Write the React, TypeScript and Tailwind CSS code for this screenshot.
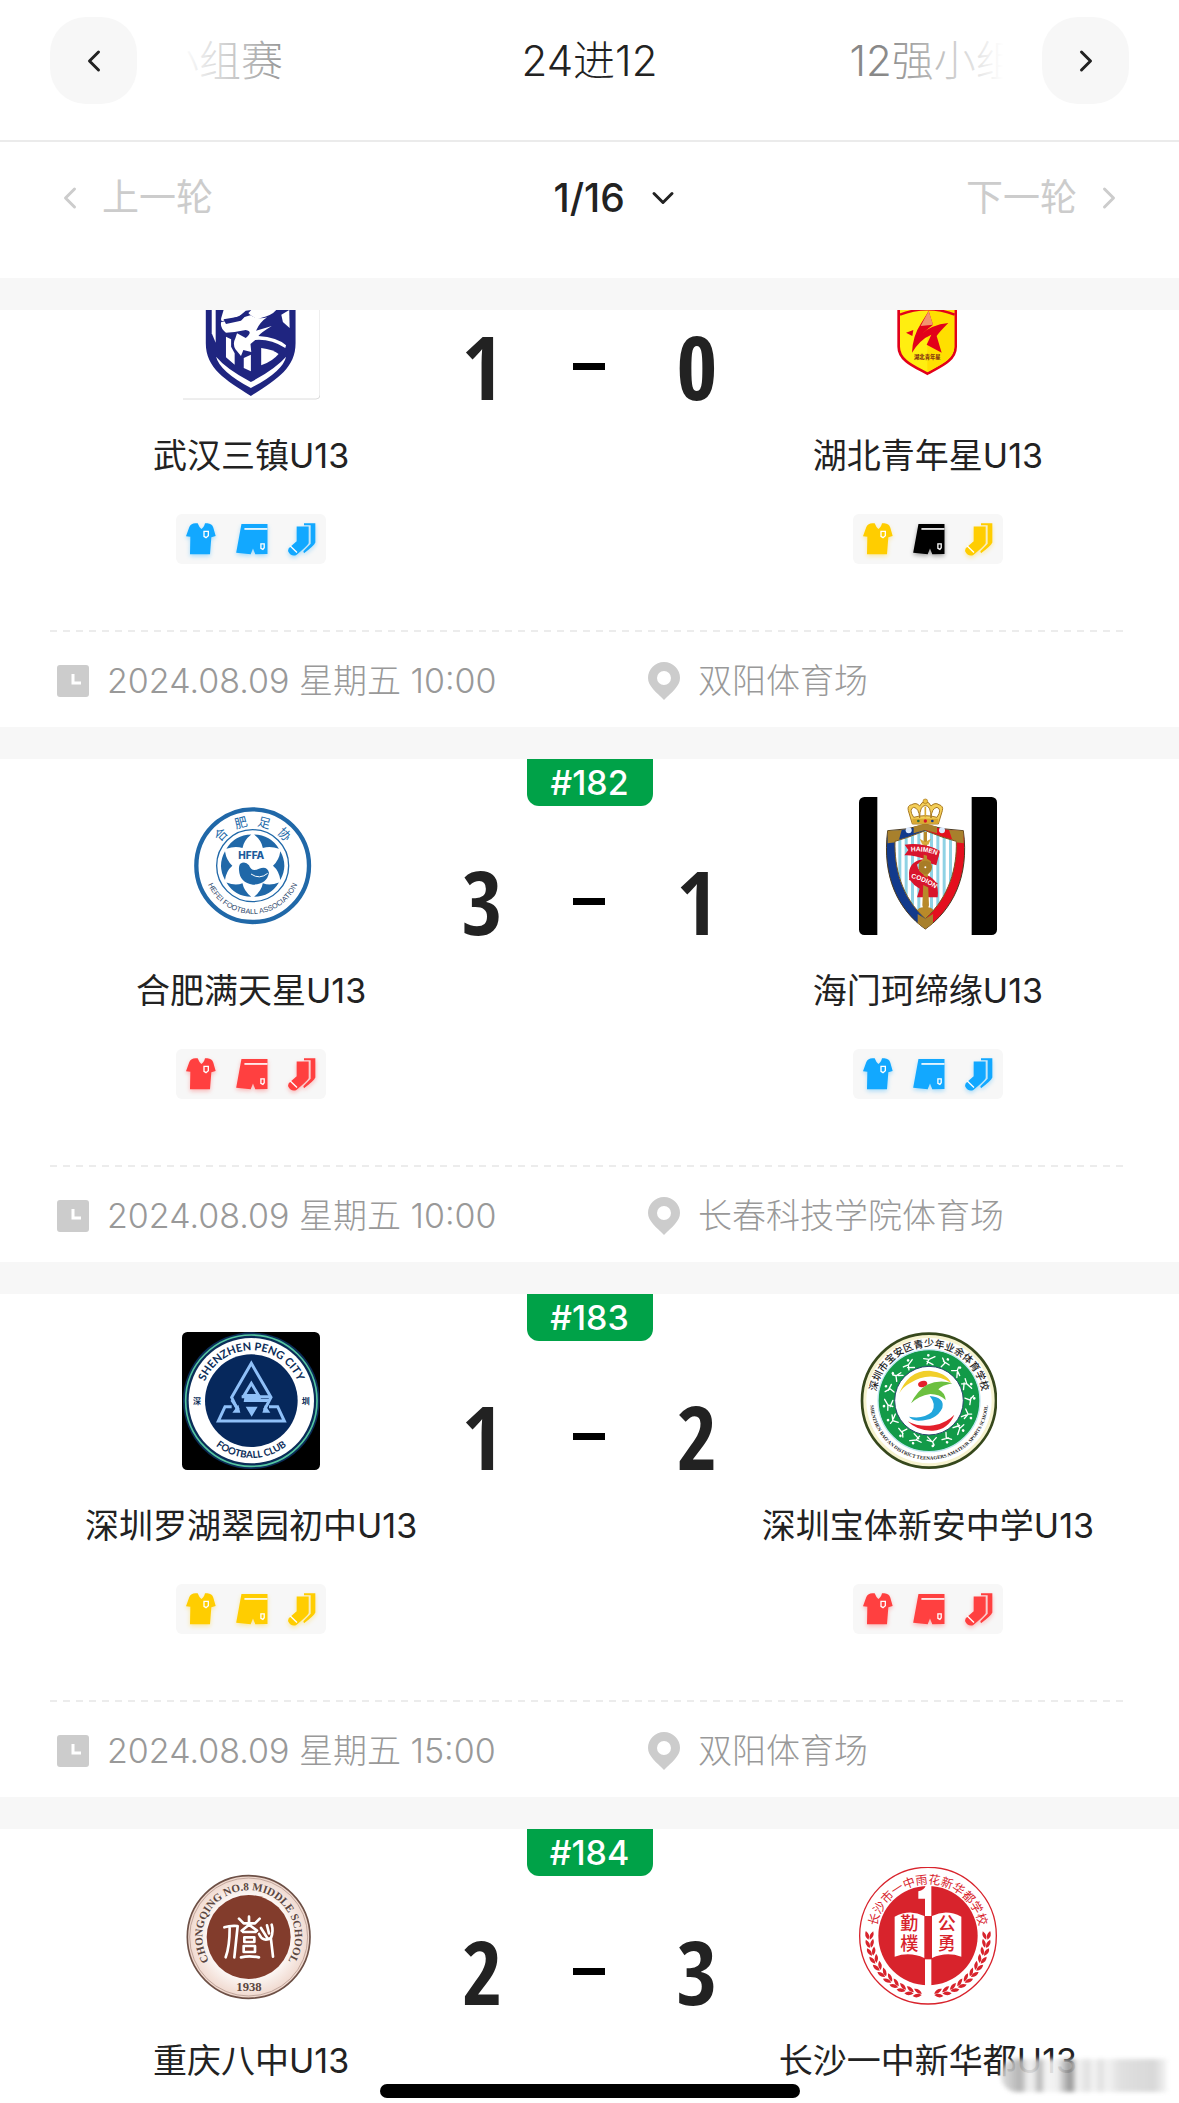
import React from "react";
import { ChevronDown, ChevronLeft, ChevronRight } from "lucide-react";

type KitColors = { shirt: string; shorts: string; socks: string };
type Team = { name: string; logo: React.ReactNode; kit: KitColors };
type Match = {
  id: number;
  home: Team;
  away: Team;
  score: [number, number];
  time: string;
  venue: string;
};

const BLUE = "#12a8ff";
const YELLOW = "#ffcd00";
const RED = "#ff4040";
const BLACK = "#000000";

const LOGO = "block size-[138px]";
const CJK = "'Noto Sans CJK SC', sans-serif";

function WuhanLogo() {
  return (
    <svg viewBox="182 262 138 138" className={LOGO} role="img" aria-label="武汉三镇">
      <path d="M183 399H316Q320 399 320 395V263" fill="none" stroke="#dcdcdc" />
      <g transform="translate(120 300) scale(.3954 .3333)">
        <path d="M217 -90H444V130C444 205 395 240 331 288C267 240 217 205 217 130Z" fill="#1f2580" />
        <path d="M232 30H242V128L232 100Z" fill="#fff" />
        <path d="M262 30H386L400 20Q392 44 356 54Q340 60 322 36Q300 52 262 62Q254 66 256 54Z" fill="#fff" />
        <path d="M256 66Q280 62 306 54L330 46Q350 60 372 52Q354 66 344 92L384 78Q356 98 350 108Q398 112 420 136L418 144Q380 116 342 120L330 132L332 156L312 150L306 168L292 148Q284 132 292 114L296 100L318 114Q338 94 318 90L290 96L268 98Q252 84 256 66Z" fill="#fff" />
        <path d="M262 58L300 50L318 32L332 30L306 62L268 72Z" fill="#1f2580" />
        <path d="M408 44L428 30L429 84L412 66Z" fill="#fff" />
        <path d="M268 110L281 118V140L290 160V194L268 172Z" fill="#fff" />
        <path d="M313 174L331 164V214L313 204Z" fill="#fff" />
        <path d="M357 144Q388 148 401 162Q386 184 357 196Z" fill="#fff" />
        <path d="M243 170Q268 206 331 246Q394 206 420 170Q412 214 331 264Q252 214 243 170Z" fill="#fff" />
      </g>
    </svg>
  );
}

function HubeiLogo() {
  return (
    <svg viewBox="117 -114 414 414" className={LOGO} role="img" aria-label="湖北青年星">
      <path d="M236 -40H407V140C407 182 360 200 322 221C284 200 236 182 236 140Z" fill="#ffee10" stroke="#e2001a" strokeWidth="8" />
      <path d="M322 30H403V140C403 178 358 196 322 216Z" fill="#ffdf00" />
      <path d="M240 44Q322 12 404 44" fill="none" stroke="#e2001a" strokeWidth="7" />
      <path d="M276 158Q278 108 302 72L326 33L339 74L302 104Q334 74 385 69Q358 96 350 108L365 158L320 134L334 104Q300 118 276 158Z" fill="#e2001a" />
      <path d="M326 33L339 74L302 78Z" fill="#f2946f" />
      <path d="M258 98L280 90L277 108Z" fill="#e2001a" />
      <text x="322" y="178" fontSize="16" fontWeight="900" fill="#8a3a10" textAnchor="middle" fontFamily={CJK}>湖北青年星</text>
    </svg>
  );
}

function HefeiLogo() {
  const rays = [0, 60, 120, 180, 240, 300];
  return (
    <svg viewBox="3 21 414 414" className={LOGO} role="img" aria-label="合肥足协">
      <defs>
        <path id="hf-top" d="M95 227A120 120 0 0 1 335 227" />
        <path id="hf-bottom" d="M70 227A145 145 0 0 0 360 227" />
      </defs>
      <circle cx="215" cy="227" r="169" fill="#fff" stroke="#2068a8" strokeWidth="13" />
      <circle cx="215" cy="227" r="108" fill="#fff" stroke="#2068a8" strokeWidth="4" />
      {rays.map((a) => (
        <path key={a} d="M172 144Q215 120 258 144Q230 148 215 166Q200 148 172 144Z" fill="#2068a8" transform={`rotate(${a + 30} 215 227)`} />
      ))}
      <text x="211" y="208" fontSize="30" fontWeight="800" fill="#1c5c9c" textAnchor="middle" fontFamily="Inter, sans-serif">HFFA</text>
      <path d="M177 222Q192 212 204 226Q212 248 234 236Q258 226 264 248Q258 282 216 284Q176 278 174 240Q173 228 177 222Z" fill="#2068a8" />
      <path d="M210 252Q236 270 260 250" fill="none" stroke="#fff" strokeWidth="3" />
      <text fontSize="38" fill="#2068a8" textAnchor="middle" fontFamily={CJK}>
        <textPath href="#hf-top" startOffset="50%">{"合\u00a0\u00a0\u00a0肥\u00a0\u00a0\u00a0足\u00a0\u00a0\u00a0协"}</textPath>
      </text>
      <text fontSize="22" fill="#2a4468" textAnchor="middle" fontFamily="'Liberation Sans', sans-serif">
        <textPath href="#hf-bottom" startOffset="50%">HEFEI FOOTBALL ASSOCIATION</textPath>
      </text>
    </svg>
  );
}

function HaimenLogo() {
  const stripes = [176, 195, 214, 233, 252, 271, 290, 309, 328];
  const shield = "M166 184L204 172L257 152L310 172L350 184C352 262 330 350 257 416C184 350 164 262 166 184Z";
  return (
    <svg viewBox="58 51 414 414" className={LOGO} role="img" aria-label="海门珂缔缘">
      <defs>
        <clipPath id="hm-inner"><path d={shield} /></clipPath>
        <path id="hm-a" d="M214 215Q256 210 300 229" />
        <path id="hm-b" d="M214 294Q250 300 290 328" />
      </defs>
      <rect x="58" y="51" width="414" height="414" rx="16" fill="#000" />
      <rect x="113" y="51" width="283" height="414" fill="#fff" />
      <path d="M257 134V447C176 390 126 290 144 152Q202 150 257 134Z" fill="#123a8c" stroke="#4a3a20" strokeWidth="3" />
      <path d="M257 134V447C338 390 390 290 371 152Q312 150 257 134Z" fill="#e4101e" stroke="#4a3a20" strokeWidth="3" />
      <path d="M144 152L186 150L176 186L144 190ZM371 152L328 150L340 186L372 190ZM222 140L257 130L292 140V160L257 150L222 160ZM234 402L257 416L280 402V430L257 447L234 430Z" fill="#a8802c" />
      <circle cx="207" cy="151" r="9" fill="#dceaff" />
      <circle cx="307" cy="151" r="9" fill="#dceaff" />
      <path d={shield} fill="#fff" />
      <g clipPath="url(#hm-inner)" fill="#8fd2e4">
        {stripes.map((x) => <rect key={x} x={x} y="150" width="9" height="280" />)}
        <path d="M222 416Q232 374 257 384Q282 374 292 416Z" fill="#b98a2a" />
      </g>
      <path d={shield} fill="none" stroke="#7a5a20" strokeWidth="3" />
      <path d="M195 194Q256 186 300 216L290 256Q244 238 232 254Q236 278 262 286Q300 300 294 352L232 352L240 326Q204 306 208 278Q212 240 256 238Q220 224 194 226L206 210Z" fill="#d8142c" />
      <path d="M252 156H262V236L274 244V272L264 284L268 376L257 410L248 376L252 284L238 272V248L252 236Z" fill="#b98a2a" />
      <path d="M240 176L257 186L274 176L266 194H248Z" fill="#d9ac3c" />
      <circle cx="257" cy="262" r="20" fill="#a87c26" />
      <circle cx="257" cy="262" r="3" fill="#fff" />
      <path d="M212 194Q262 190 300 212L294 238Q252 220 210 220ZM212 276Q252 282 294 310L288 336Q246 308 208 300Z" fill="#d8142c" />
      <text fontSize="20" fontWeight="700" fill="#fff" fontFamily="'Liberation Sans', sans-serif"><textPath href="#hm-a">HAIMEN</textPath></text>
      <text fontSize="20" fontWeight="700" fill="#fff" fontFamily="'Liberation Sans', sans-serif"><textPath href="#hm-b">CODION</textPath></text>
      <path d="M218 132L206 92Q202 76 216 74Q230 66 240 78Q246 64 257 66Q268 64 274 78Q286 66 298 74Q312 78 308 92L296 132Z" fill="#f4cf58" stroke="#a87820" strokeWidth="3" />
      <path d="M222 112Q206 88 222 82Q238 84 240 114Q240 78 257 76Q274 78 274 114Q276 84 292 82Q308 88 292 112Q257 102 222 112Z" fill="#fff" stroke="#a87820" strokeWidth="3" />
      <path d="M257 80V112" stroke="#d9a830" strokeWidth="5" />
      <circle cx="257" cy="64" r="7" fill="#eec040" stroke="#a87820" strokeWidth="2" />
      <rect x="218" y="116" width="78" height="14" fill="#d9a830" />
      <circle cx="236" cy="123" r="4" fill="#2d6b3a" />
      <circle cx="257" cy="123" r="5" fill="#d8142c" />
      <circle cx="278" cy="123" r="4" fill="#123a8c" />
    </svg>
  );
}

function PengCityLogo() {
  return (
    <svg viewBox="37 36 414 414" className={LOGO} role="img" aria-label="Shenzhen Peng City">
      <defs>
        <path id="pc-top" d="M94 242A151 151 0 0 1 396 242" />
        <path id="pc-bottom" d="M73 242A172 172 0 0 0 417 242" />
      </defs>
      <rect x="37" y="36" width="414" height="414" rx="16" fill="#000" />
      <circle cx="245" cy="242" r="205" fill="#0a2c58" />
      <circle cx="245" cy="242" r="197" fill="none" stroke="#56c6a0" strokeWidth="5" />
      <circle cx="245" cy="242" r="188" fill="#fff" />
      <circle cx="245" cy="242" r="139" fill="#06285c" />
      <g fill="none" stroke="#8fc0f8" strokeWidth="9">
        <path d="M204 270L186 232L245 130L304 232L284 270" />
        <path d="M186 260H166L146 303H344L324 260H298" />
        <path d="M220 232L245 190L270 232" />
        <path d="M216 230H304M186 240L206 268" />
      </g>
      <path d="M226 222H268L274 236H302L292 246H222ZM228 260H264L246 290ZM188 278L206 254L212 278ZM278 278L286 254L302 278Z" fill="#8fc0f8" />
      <text fontSize="33" fontWeight="700" fill="#0a2c58" textAnchor="middle" fontFamily="Lato, sans-serif">
        <textPath href="#pc-top" startOffset="50%">SHENZHEN PENG CITY</textPath>
      </text>
      <text fontSize="29" fontWeight="700" fill="#0a2c58" textAnchor="middle" fontFamily="Lato, sans-serif">
        <textPath href="#pc-bottom" startOffset="50%">FOOTBALL CLUB</textPath>
      </text>
      <text x="82" y="252" fontSize="24" fontWeight="700" fill="#0a2c58" textAnchor="middle" fontFamily={CJK}>深</text>
      <text x="408" y="252" fontSize="24" fontWeight="700" fill="#0a2c58" textAnchor="middle" fontFamily={CJK}>圳</text>
    </svg>
  );
}

function BaoanLogo() {
  const figures = Array.from({ length: 16 }, (_, i) => i * 22);
  const poses = [
    "M252 116L268 118L286 110M268 118L262 132M262 124L280 134",
    "M258 108L270 120L264 134M264 116L284 120",
    "M254 130L266 118L282 124M266 118L262 108M270 122L280 134",
  ];
  return (
    <svg viewBox="58 36 414 414" className={LOGO} role="img" aria-label="深圳市宝安区青少年业余体育学校">
      <defs>
        <path id="ba-top" d="M108 260A161 161 0 1 1 428 260" />
        <path id="ba-bottom" d="M91 242A177 177 0 0 0 445 242" />
      </defs>
      <circle cx="268" cy="242" r="201" fill="#f6f3cf" stroke="#36481c" strokeWidth="8" />
      <circle cx="268" cy="242" r="188" fill="#fff" />
      <circle cx="268" cy="242" r="153" fill="#129a48" stroke="#bfe6f0" strokeWidth="4" />
      <g fill="none" stroke="#fff" strokeWidth="4" strokeLinecap="round">
        {figures.map((a, i) => (
          <g key={a} transform={`rotate(${a} 268 242)`}>
            <path d={poses[i % 3]} />
            <circle cx={i % 2 ? 274 : 266} cy="106" r="2" />
          </g>
        ))}
      </g>
      <circle cx="268" cy="242" r="103" fill="#fff" stroke="#27456b" strokeWidth="3" />
      <path d="M178 222Q206 150 270 152Q320 158 334 188Q270 150 210 190Q188 202 178 222Z" fill="#f1cf2a" />
      <ellipse cx="249" cy="192" rx="14" ry="9" fill="#e4202c" transform="rotate(-15 249 192)" />
      <path d="M214 250Q232 212 262 194Q300 178 338 190Q306 196 296 208Q316 218 318 240Q300 222 272 222Q236 228 214 250Z" fill="#6cc040" />
      <path d="M270 228Q316 232 308 264Q290 302 236 302Q216 300 208 290Q252 298 276 276Q292 254 270 228Z" fill="#22a6dc" />
      <path d="M204 304Q236 322 282 316Q322 308 344 284Q326 328 280 332Q234 334 204 304Z" fill="#e4202c" />
      <text fontSize="30" fontWeight="500" fill="#222" textAnchor="middle" fontFamily={CJK}>
        <textPath href="#ba-top" startOffset="50%">深圳市宝安区青少年业余体育学校</textPath>
      </text>
      <text fontSize="15" fontWeight="700" fill="#222" textAnchor="middle" fontFamily="'Liberation Serif', serif">
        <textPath href="#ba-bottom" startOffset="50%">SHENZHEN BAO'AN DISTRICT TEENAGERS AMATEUR SPORTS SCHOOL</textPath>
      </text>
    </svg>
  );
}

function ChongqingLogo() {
  return (
    <svg viewBox="37 21 414 414" className={LOGO} role="img" aria-label="Chongqing No.8 Middle School">
      <defs>
        <radialGradient id="cq-ring">
          <stop offset="60%" stopColor="#ffffff" />
          <stop offset="100%" stopColor="#efd6cb" />
        </radialGradient>
        <path id="cq-top" d="M122 308A139 139 0 1 1 352 308" />
      </defs>
      <circle cx="237" cy="231" r="184" fill="url(#cq-ring)" stroke="#6d5046" strokeWidth="5" />
      <circle cx="237" cy="231" r="177" fill="none" stroke="#a98d82" strokeWidth="2" />
      <circle cx="237" cy="231" r="126" fill="#823c2c" />
      <g fill="none" stroke="#fff" strokeWidth="8" strokeLinecap="round" strokeLinejoin="round">
        <path d="M164 202Q182 196 204 198L194 292M180 204Q180 260 168 292" />
        <path d="M208 176L222 190H256L270 176M238 170V190M216 212L238 194L262 212M220 216H258" />
        <path d="M224 232H254V246H224ZM222 258H256V276H222ZM214 292Q238 286 268 292" />
        <path d="M268 222Q280 248 304 234Q312 214 306 194M274 204L294 236M292 196L298 220M304 238L310 290" />
      </g>
      <text fontSize="33" fontWeight="700" fill="#5a4640" textAnchor="middle" fontFamily="'Liberation Serif', serif">
        <textPath href="#cq-top" startOffset="50%">CHONGQING NO.8 MIDDLE SCHOOL</textPath>
      </text>
      <text x="238" y="392" fontSize="38" fontWeight="700" fill="#5a4640" textAnchor="middle" fontFamily="'Liberation Serif', serif">1938</text>
    </svg>
  );
}

function ChangshaLogo() {
  const leaves = Array.from({ length: 11 }, (_, i) => 14 + i * 8);
  const branch = leaves.map((a) => (
    <g key={a} transform={`rotate(${100 - a} 265 257)`}>
      <path d="M265 432Q250 436 240 420Q256 416 265 432ZM265 436Q252 450 238 442Q250 428 265 436Z" />
    </g>
  ));
  return (
    <svg viewBox="58 51 414 414" className={LOGO} role="img" aria-label="长沙市一中雨花新华都学校">
      <defs>
        <path id="cs-top" d="M110 240A156 156 0 0 1 420 240" />
      </defs>
      <circle cx="265" cy="257" r="205" fill="#fff" stroke="#d8232c" strokeWidth="4" />
      <circle cx="265" cy="257" r="149" fill="#d8232c" />
      <g fill="#d8232c">
        {branch}
        <g transform="translate(530 0) scale(-1 1)">{branch}</g>
      </g>
      <path d="M236 124Q254 120 258 107H275V408H256V146H236Z" fill="#fff" />
      <path d="M165 200Q210 176 254 198V324Q210 304 165 320ZM277 198Q320 176 365 200V320Q320 304 277 324Z" fill="#fff" />
      <rect x="256" y="198" width="21" height="130" fill="#d8232c" />
      <g fontSize="54" fontWeight="500" fill="#d8232c" textAnchor="middle" fontFamily={CJK}>
        <text x="209" y="240">勤</text>
        <text x="209" y="300">樸</text>
        <text x="321" y="240">公</text>
        <text x="321" y="300">勇</text>
      </g>
      <text fontSize="36" fill="#d8232c" textAnchor="middle" fontFamily={CJK}>
        <textPath href="#cs-top" startOffset="50%">长沙市一中雨花新华都学校</textPath>
      </text>
    </svg>
  );
}

function Kit({ shirt, shorts, socks }: KitColors) {
  return (
    <div className="flex h-[50px] w-[150px] items-center justify-between rounded-md bg-[#f7f7f7] px-[10px]">
      <svg viewBox="0 0 90 96" className="h-8 w-[30px] overflow-visible" style={{ filter: `drop-shadow(0 2px 2px ${shirt}55)` }}>
        <path d="M0 40L10 12Q16 0 30 1H35Q40 14 46 18Q54 14 57 1H64Q78 2 82 14L89 39L76 43L72 94H12L13 41Z" fill={shirt} />
        <path d="M54 25H67V38L60 44L54 40Z" fill="none" stroke="#fff" strokeWidth="4" />
      </svg>
      <svg viewBox="0 0 96 94" className="h-[31px] w-8 overflow-visible" style={{ filter: `drop-shadow(0 2px 2px ${shorts}55)` }}>
        <path d="M16 0H95V91L58 92L51 74L44 92L0 87Z" fill={shorts} />
        <path d="M25 15H95" stroke="#fff" strokeWidth="5" />
        <path d="M75 60H85V72L81 77L75 74Z" fill="none" stroke="#fff" strokeWidth="4" />
      </svg>
      <svg viewBox="0 0 84 98" className="h-[33px] w-7 overflow-visible" style={{ filter: `drop-shadow(0 2px 2px ${socks}55)` }}>
        <path d="M48 0H82V58Q78 68 48 90L46 84L68 62V6H48Z" fill={socks} />
        <path d="M26 10H62V60Q58 68 24 96Q8 100 1 86Q-2 76 8 70L26 54Z" fill={socks} />
        <path d="M6 68L27 88" stroke="#fff" strokeWidth="4" />
      </svg>
    </div>
  );
}

function TeamBlock({ team }: { team: Team }) {
  return (
    <div className="flex flex-col items-center pt-[38px]">
      {team.logo}
      <h3 className="mt-9 mb-[38px] text-[34px] leading-10 font-normal whitespace-nowrap text-[#222]">{team.name}</h3>
      <Kit {...team.kit} />
    </div>
  );
}

function MatchCard({ match }: { match: Match }) {
  return (
    <article className="relative bg-white">
      <span className="absolute top-0 left-1/2 flex h-[47px] w-[126px] -translate-x-1/2 items-center justify-center rounded-b-xl bg-[#00a248] text-[34px] font-medium text-white">
        #{match.id}
      </span>
      <div className="grid grid-cols-[10fr_7fr_10fr] px-[52px] pb-[66px]">
        <TeamBlock team={match.home} />
        <div className="mt-[110px] flex h-16 items-center justify-between font-['Noto_Sans_ExtraCondensed','Open_Sans_Condensed','Roboto_Condensed','Liberation_Sans_Narrow',Roboto,sans-serif] text-[88px] leading-none font-bold text-[#222]">
          <span className="w-16 text-center">{match.score[0]}</span>
          <span className="h-[7px] w-8 bg-black" />
          <span className="w-16 text-center">{match.score[1]}</span>
        </div>
        <TeamBlock team={match.away} />
      </div>
      <div className="mx-[50px] h-[2px] bg-[repeating-linear-gradient(90deg,#ececec_0_7px,transparent_7px_13px)]" />
      <footer className="flex h-[95px] items-center px-[57px] pt-[2px] text-[34px] font-light text-[#999]">
        <div className="flex w-[55.5%] items-center gap-[18px]">
          <svg viewBox="0 0 32 32" className="size-8 shrink-0">
            <rect width="32" height="32" rx="3" fill="#ccc" />
            <path d="M16 9V18H24" fill="none" stroke="#fff" strokeWidth="3" />
          </svg>
          <time className="whitespace-nowrap">{match.time}</time>
        </div>
        <div className="flex items-center gap-[18px]">
          <svg viewBox="0 0 32 38" className="h-[38px] w-8 shrink-0">
            <path d="M16 0A16 16 0 0 1 32 16C32 24 24 30 16 38C8 30 0 24 0 16A16 16 0 0 1 16 0ZM16 9A7 7 0 0 0 16 23A7 7 0 0 0 16 9Z" fill="#ccc" />
          </svg>
          <span className="whitespace-nowrap">{match.venue}</span>
        </div>
      </footer>
    </article>
  );
}

const kit = (shirt: string, shorts = shirt, socks = shirt): KitColors => ({ shirt, shorts, socks });

const matches: Match[] = [
  {
    id: 181,
    home: { name: "武汉三镇U13", logo: <WuhanLogo />, kit: kit(BLUE) },
    away: { name: "湖北青年星U13", logo: <HubeiLogo />, kit: kit(YELLOW, BLACK, YELLOW) },
    score: [1, 0],
    time: "2024.08.09 星期五 10:00",
    venue: "双阳体育场",
  },
  {
    id: 182,
    home: { name: "合肥满天星U13", logo: <HefeiLogo />, kit: kit(RED) },
    away: { name: "海门珂缔缘U13", logo: <HaimenLogo />, kit: kit(BLUE) },
    score: [3, 1],
    time: "2024.08.09 星期五 10:00",
    venue: "长春科技学院体育场",
  },
  {
    id: 183,
    home: { name: "深圳罗湖翠园初中U13", logo: <PengCityLogo />, kit: kit(YELLOW) },
    away: { name: "深圳宝体新安中学U13", logo: <BaoanLogo />, kit: kit(RED) },
    score: [1, 2],
    time: "2024.08.09 星期五 15:00",
    venue: "双阳体育场",
  },
  {
    id: 184,
    home: { name: "重庆八中U13", logo: <ChongqingLogo />, kit: kit(RED) },
    away: { name: "长沙一中新华都U13", logo: <ChangshaLogo />, kit: kit(BLUE) },
    score: [2, 3],
    time: "2024.08.09 星期五 15:00",
    venue: "长春科技学院体育场",
  },
];

const roundButton = "flex size-[87px] shrink-0 items-center justify-center rounded-[36px] bg-[#f7f7f7] text-[#222]";

export default function App() {
  return (
    <div className="relative flex h-screen flex-col overflow-hidden bg-white font-[Inter,'Noto_Sans_CJK_SC',sans-serif] text-[#222]">
      <header className="flex h-[142px] shrink-0 items-start border-b-2 border-[#ebebeb] px-[50px] pt-[17px]">
        <button type="button" aria-label="上一阶段" className={roundButton}>
          <ChevronLeft size={36} strokeWidth={2} />
        </button>
        <nav className="relative mx-8 grid h-[87px] min-w-0 flex-1 grid-cols-[minmax(0,1fr)_auto_minmax(0,1fr)] items-center overflow-hidden text-[42px] font-light whitespace-nowrap">
          <button type="button" className="-ml-3 justify-self-start text-[#888]">小组赛</button>
          <button type="button">24进12</button>
          <button type="button" className="justify-self-start pl-[192px] text-[#888]">12强小组赛</button>
          <span className="pointer-events-none absolute inset-y-0 left-0 w-32 bg-linear-to-r from-white from-10% to-transparent" />
          <span className="pointer-events-none absolute inset-y-0 right-0 w-32 bg-linear-to-l from-white from-5% to-transparent" />
        </nav>
        <button type="button" aria-label="下一阶段" className={roundButton}>
          <ChevronRight size={36} strokeWidth={2} />
        </button>
      </header>

      <div className="grid h-[136px] shrink-0 grid-cols-3 items-start px-[52px] pt-7 text-[37px]">
        <button type="button" className="flex h-14 items-center gap-[14px] justify-self-start text-[#ccc]">
          <ChevronLeft size={36} strokeWidth={2} />
          上一轮
        </button>
        <div className="ml-14 flex h-14 items-center gap-5 justify-self-center text-[39px] font-medium">
          <select aria-label="轮次" className="cursor-pointer appearance-none bg-transparent" defaultValue="1/16">
            <option>1/16</option>
          </select>
          <ChevronDown size={36} strokeWidth={2} className="pointer-events-none" />
        </div>
        <button type="button" className="flex h-14 items-center gap-[14px] justify-self-end text-[#ccc]">
          下一轮
          <ChevronRight size={36} strokeWidth={2} />
        </button>
      </div>

      <main className="min-h-0 flex-1 overflow-y-auto border-t-[32px] border-[#f7f7f7] bg-[#f7f7f7] [scrollbar-width:none]">
        <div className="-mt-[86px] flex flex-col gap-8">
          {matches.map((m) => <MatchCard key={m.id} match={m} />)}
        </div>
      </main>

      <div className="pointer-events-none absolute right-[12px] bottom-[11px] h-[33px] w-[166px] rounded-l-2xl bg-[linear-gradient(90deg,#ddd_0%,#bbb_8%,#aaa_12%,#eee_16%,#e8e8e8_20%,#aaa_23%,#f4f4f4_27%,#eee_34%,#888_42%,#f4f4f4_46%,#ddd_52%,#f4f4f4_56%,#ddd_60%,#f2f2f2_64%,#ddd_72%,#d4d4d4_92%,#f4f4f4_100%)] opacity-90 blur-[2px]" />
      <div className="absolute bottom-[5px] left-1/2 h-[14px] w-[420px] -translate-x-1/2 rounded-full bg-black" />
    </div>
  );
}
